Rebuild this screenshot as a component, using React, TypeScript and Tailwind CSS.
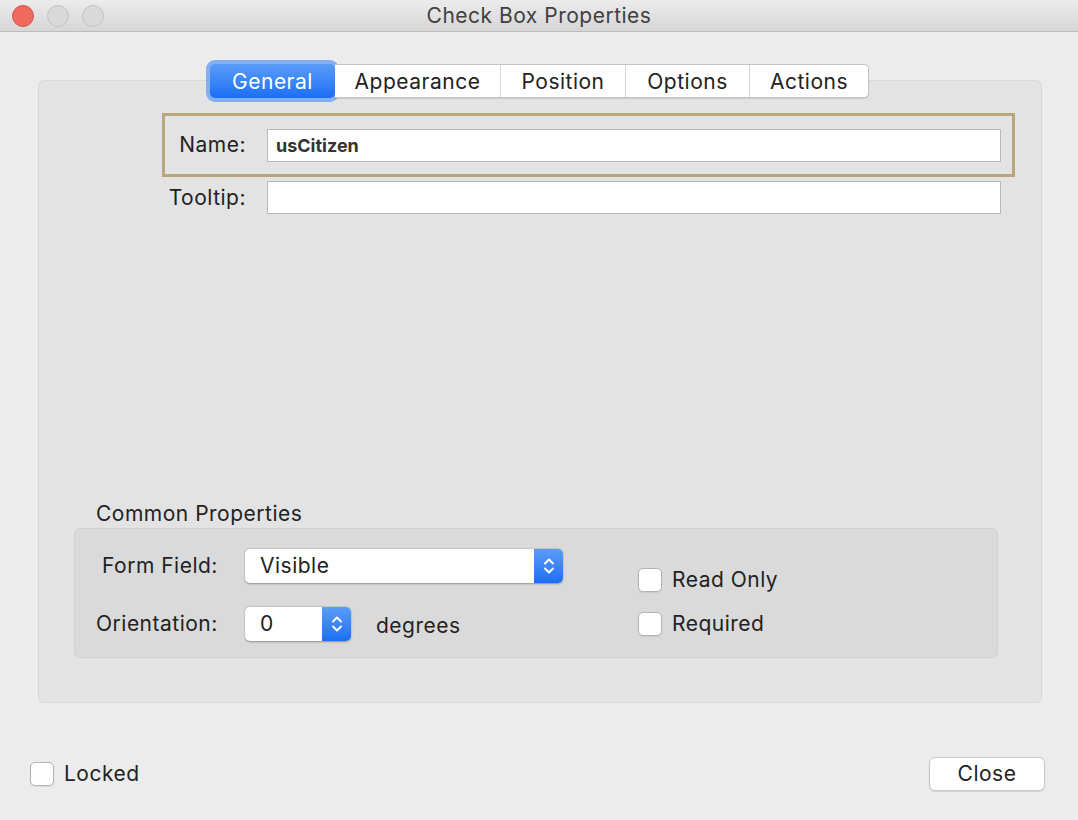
import React from 'react';

const font = { fontFamily: 'Inter, "Liberation Sans", sans-serif' };

function Stepper() {
  return (
    <svg width="14" height="20" viewBox="0 0 14 20" fill="none" stroke="white" strokeWidth="2" strokeLinecap="round" strokeLinejoin="round">
      <path d="M3 7.5 L7 3.5 L11 7.5" />
      <path d="M3 12.5 L7 16.5 L11 12.5" />
    </svg>
  );
}

function CheckBox() {
  return (
    <span className="block w-6 h-6 rounded-[5px] bg-white border border-[#b3b3b3] shadow-[0_1px_1px_rgba(0,0,0,0.08)] shrink-0" />
  );
}

const tabs = [
  { label: 'Appearance', w: 'w-[165px]' },
  { label: 'Position', w: 'w-[125px]' },
  { label: 'Options', w: 'w-[124px]' },
  { label: 'Actions', w: 'w-[119px]' },
];

export default function App() {
  return (
    <div className="w-[1078px] h-[820px] bg-[#ececec] flex flex-col text-[#222] text-[21px] tracking-[0.5px] overflow-hidden" style={font}>
      {/* title bar */}
      <div className="h-8 shrink-0 grid grid-cols-[1fr_auto_1fr] items-center bg-gradient-to-b from-[#ececec] to-[#d6d6d6] border-b border-[#bcbcbc]">
        <div className="flex items-center gap-[13px] pl-[12px]">
          <span className="w-[22px] h-[22px] rounded-full bg-[#ee6a5e] border border-[#d6554a]" />
          <span className="w-[22px] h-[22px] rounded-full bg-[#d9d9d9] border border-[#c2c2c2]" />
          <span className="w-[22px] h-[22px] rounded-full bg-[#d9d9d9] border border-[#c2c2c2]" />
        </div>
        <div className="text-[#404040] leading-none">Check Box Properties</div>
        <div />
      </div>

      {/* tabs */}
      <div className="relative z-10 flex justify-start pl-[206px] pt-[28px]">
        <div className="flex items-center">
          <div className="p-[4px] rounded-[9px] bg-[#82aef2]">
            <div className="w-[125px] h-[34px] pt-[2px] rounded-[5px] bg-gradient-to-b from-[#5a9cf8] to-[#1a6ef4] text-white flex items-center justify-center">
              General
            </div>
          </div>
          <div className="flex h-[34px] -ml-[4px] bg-white rounded-r-[5px] border border-[#c4c4c4] border-l-0 shadow-[0_1px_1px_rgba(0,0,0,0.12)]">
            {tabs.map((t, i) => (
              <div
                key={t.label}
                className={`${t.w} pt-[2px] flex items-center justify-center text-[#222] ${i > 0 ? 'border-l border-[#d6d6d6]' : ''}`}
              >
                {t.label}
              </div>
            ))}
          </div>
        </div>
      </div>

      {/* main panel */}
      <div className="ml-[38px] mr-[36px] -mt-[22px] h-[623px] bg-[#e3e3e3] border border-[#d8d8d8] rounded-[6px] flex flex-col">
        <div className="ml-[123px] mr-[26px] mt-[32px] border-[3px] border-[#b6a87b] flex items-center h-[64px]">
          <div className="w-[81px] text-right">Name:</div>
          <div className="ml-[21px] mr-[11px] flex-1 h-[33px] bg-white border border-[#b8b8b8] flex items-center px-[8px] text-[18px] tracking-normal font-bold text-[#333]">
            usCitizen
          </div>
        </div>
        <div className="ml-[123px] mr-[26px] mt-[4px] flex items-center h-[33px] pl-[3px] pr-[14px]">
          <div className="w-[81px] text-right">Tooltip:</div>
          <div className="ml-[21px] flex-1 h-[33px] bg-white border border-[#b8b8b8]" />
        </div>

        <div className="mt-auto mb-[44px] ml-[35px] mr-[43px]">
          <div className="pl-[22px] leading-none mb-[4px]">Common Properties</div>
          <div className="h-[130px] bg-[#dadada] border border-[#d0d0d0] rounded-[6px] flex">
            <div className="flex flex-col pt-[20px]">
              <div className="flex items-center h-[34px]">
                <div className="w-[170px] pl-[27px]">Form Field:</div>
                <div className="w-[318px] h-[34px] flex rounded-[5px] bg-white shadow-[0_0.5px_2px_rgba(0,0,0,0.35)] overflow-hidden">
                  <div className="flex-1 flex items-center pl-[15px]">Visible</div>
                  <div className="w-[29px] bg-gradient-to-b from-[#5a9cf8] to-[#1a6ef4] flex items-center justify-center">
                    <Stepper />
                  </div>
                </div>
              </div>
              <div className="flex items-center h-[34px] mt-[24px]">
                <div className="w-[170px] pl-[21px]">Orientation:</div>
                <div className="w-[106px] h-[34px] flex rounded-[5px] bg-white shadow-[0_0.5px_2px_rgba(0,0,0,0.35)] overflow-hidden">
                  <div className="flex-1 flex items-center pl-[15px]">0</div>
                  <div className="w-[29px] bg-gradient-to-b from-[#5a9cf8] to-[#1a6ef4] flex items-center justify-center">
                    <Stepper />
                  </div>
                </div>
                <div className="ml-[25px] mt-[4px]">degrees</div>
              </div>
            </div>
            <div className="ml-[75px] pt-[39px] flex flex-col gap-[20px]">
              <div className="flex items-center gap-[10px] h-6">
                <CheckBox />
                <span>Read Only</span>
              </div>
              <div className="flex items-center gap-[10px] h-6">
                <CheckBox />
                <span>Required</span>
              </div>
            </div>
          </div>
        </div>
      </div>

      {/* footer */}
      <div className="flex items-center justify-between pl-[30px] pr-[33px] mt-[54px]">
        <div className="flex items-center gap-[10px]">
          <CheckBox />
          <span>Locked</span>
        </div>
        <div className="w-[116px] h-[34px] rounded-[6px] bg-white border border-[#c8c8c8] shadow-[0_1px_1px_rgba(0,0,0,0.12)] flex items-center justify-center">
          Close
        </div>
      </div>
    </div>
  );
}
